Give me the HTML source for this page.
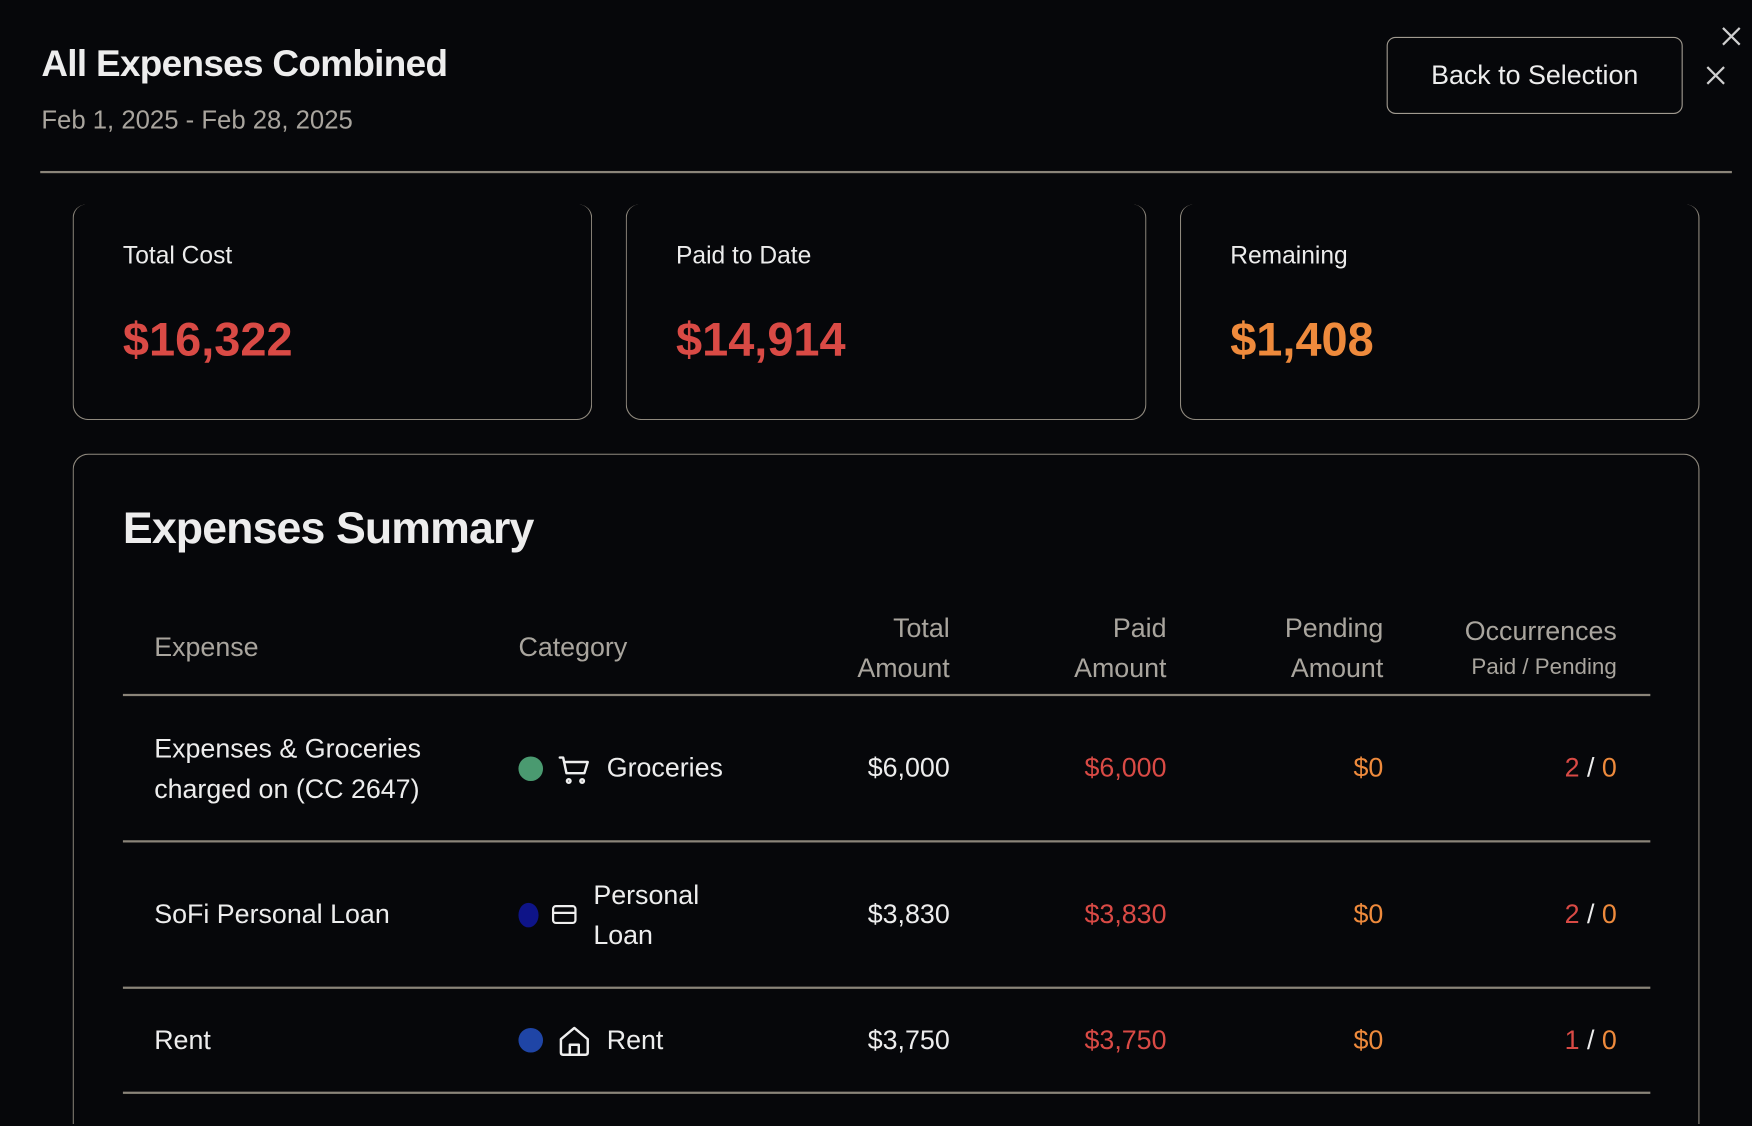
<!DOCTYPE html>
<html><head><meta charset="utf-8"><style>
html,body{margin:0;padding:0;background:#06070a;width:1752px;height:1126px;overflow:hidden}
#w{position:absolute;left:0;top:0;width:1568px;height:1007px;overflow:hidden;transform:scale(1.11735);transform-origin:0 0;font-family:"Liberation Sans",sans-serif;color:#ededed}
.a{position:absolute;white-space:nowrap}
.card{position:absolute;top:183px;height:193px;border:1.5px solid #8f897e;border-top:none;border-radius:12px 12px 14px 14px;box-sizing:border-box}
.lab{position:absolute;left:44px;top:33px;font-size:22px;color:#ececec}
.val{position:absolute;left:44px;top:97px;font-size:42px;font-weight:bold}
.red{color:#d94a45}.org{color:#ee8a3c}.gr{color:#a9a59e}
.hl{position:absolute;left:110px;width:1367px;height:2px;background:#8a8479}
.r{text-align:right}
.t{font-size:24px}
</style></head><body><div id="w">
<div class="a" style="left:37px;top:38px;font-size:33px;font-weight:bold;letter-spacing:-0.6px">All Expenses Combined</div>
<div class="a gr" style="left:37px;top:94px;font-size:23px">Feb 1, 2025 - Feb 28, 2025</div>
<div class="a" style="left:1241px;top:33px;width:265px;height:69px;border:1.5px solid #a09a90;border-radius:8px;box-sizing:border-box;text-align:center;line-height:68px;font-size:24px">Back to Selection</div>
<svg class="a" style="left:1540px;top:23px" width="19" height="19" viewBox="0 0 19 19"><path d="M2 2L17 17M17 2L2 17" stroke="#cfcfcf" stroke-width="2"/></svg>
<svg class="a" style="left:1526px;top:58px" width="19" height="19" viewBox="0 0 19 19"><path d="M2 2L17 17M17 2L2 17" stroke="#cfcfcf" stroke-width="2"/></svg>
<div class="a" style="left:36px;top:153px;width:1514px;height:2px;background:#8a8479"></div>

<div class="card" style="left:65px;width:465px"><div class="lab">Total Cost</div><div class="val red">$16,322</div></div>
<div class="card" style="left:560px;width:466px"><div class="lab">Paid to Date</div><div class="val red">$14,914</div></div>
<div class="card" style="left:1056px;width:465px"><div class="lab">Remaining</div><div class="val org">$1,408</div></div>

<div class="a" style="left:65px;top:406px;width:1456px;height:600px;border:1.5px solid #8f897e;border-bottom:none;border-radius:14px 14px 0 0;box-sizing:border-box"></div>
<div class="a" style="left:110px;top:451px;font-size:40px;font-weight:bold;letter-spacing:-0.8px">Expenses Summary</div>

<div class="a gr t" style="left:138px;top:566px">Expense</div>
<div class="a gr t" style="left:464px;top:566px">Category</div>
<div class="a gr t r" style="right:718px;top:545px;line-height:36px">Total<br>Amount</div>
<div class="a gr t r" style="right:524px;top:545px;line-height:36px">Paid<br>Amount</div>
<div class="a gr t r" style="right:330px;top:545px;line-height:36px">Pending<br>Amount</div>
<div class="a gr t r" style="right:121px;top:552px">Occurrences</div>
<div class="a gr r" style="right:121px;top:586px;font-size:20px">Paid / Pending</div>
<div class="hl" style="top:621px"></div>

<div class="a t" style="left:138px;top:653px;line-height:36px">Expenses &amp; Groceries<br>charged on (CC 2647)</div>
<div class="a" style="left:464px;top:677px;width:22px;height:22px;border-radius:50%;background:#4a9a70"></div>
<svg class="a" style="left:499px;top:675px" width="30" height="28" viewBox="0 0 30 28" fill="none" stroke="#eee" stroke-width="2.2" stroke-linecap="round" stroke-linejoin="round"><path d="M2 3H5L8 17H24L27 7H7"/><circle cx="10" cy="24" r="1.6"/><circle cx="22" cy="24" r="1.6"/></svg>
<div class="a t" style="left:543px;top:674px">Groceries</div>
<div class="a t r" style="right:718px;top:674px">$6,000</div>
<div class="a t r red" style="right:524px;top:674px">$6,000</div>
<div class="a t r org" style="right:330px;top:674px">$0</div>
<div class="a t r" style="right:121px;top:674px"><span class="red">2</span> / <span class="org">0</span></div>
<div class="hl" style="top:752px"></div>

<div class="a t" style="left:138px;top:805px">SoFi Personal Loan</div>
<div class="a" style="left:464px;top:808px;width:18px;height:22px;border-radius:50%;background:#0e1488"></div>
<svg class="a" style="left:493px;top:808px" width="24" height="22" viewBox="0 0 24 22" fill="none" stroke="#eee" stroke-width="2"><rect x="2" y="3" width="20" height="15" rx="2.5"/><path d="M2 9H22"/></svg>
<div class="a t" style="left:531px;top:784px;line-height:36px">Personal<br>Loan</div>
<div class="a t r" style="right:718px;top:805px">$3,830</div>
<div class="a t r red" style="right:524px;top:805px">$3,830</div>
<div class="a t r org" style="right:330px;top:805px">$0</div>
<div class="a t r" style="right:121px;top:805px"><span class="red">2</span> / <span class="org">0</span></div>
<div class="hl" style="top:883px"></div>

<div class="a t" style="left:138px;top:918px">Rent</div>
<div class="a" style="left:464px;top:920px;width:22px;height:22px;border-radius:50%;background:#1f45a6"></div>
<svg class="a" style="left:499px;top:917px" width="30" height="30" viewBox="0 0 30 30" fill="none" stroke="#eee" stroke-width="2.2" stroke-linejoin="round"><path d="M3 13L15 3L27 13V25Q27 27 25 27H5Q3 27 3 25Z"/><path d="M11 27V18H19V27"/></svg>
<div class="a t" style="left:543px;top:918px">Rent</div>
<div class="a t r" style="right:718px;top:918px">$3,750</div>
<div class="a t r red" style="right:524px;top:918px">$3,750</div>
<div class="a t r org" style="right:330px;top:918px">$0</div>
<div class="a t r" style="right:121px;top:918px"><span class="red">1</span> / <span class="org">0</span></div>
<div class="hl" style="top:977px"></div>
</div></body></html>
